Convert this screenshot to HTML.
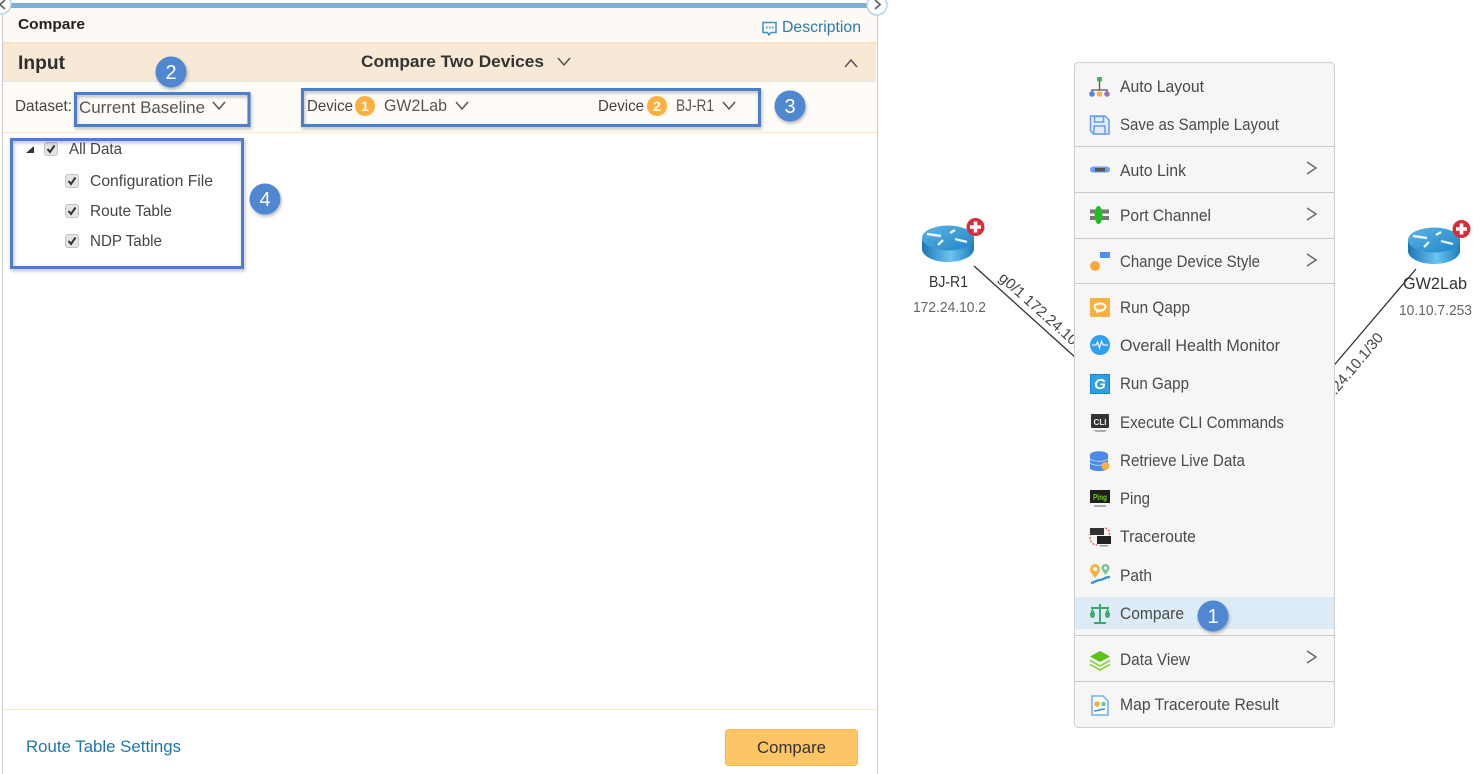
<!DOCTYPE html>
<html><head><meta charset="utf-8"><title>Compare</title>
<style>
html,body{margin:0;padding:0;background:#fff;width:1483px;height:774px;overflow:hidden}
svg{display:block;position:absolute;left:0;top:0}
text{font-family:"Liberation Sans",sans-serif;fill:#444;font-size:16px}
.m{font-size:16.5px;fill:#4a4a4a}
.b{font-weight:bold;fill:#333}
.n{fill:#fff;text-anchor:middle}
.c{fill:none;stroke:#555;stroke-width:1.500}
.ma{fill:none;stroke:#6e6e6e;stroke-width:1.600}
.bx{fill:none;stroke:#4f7ec9;stroke-width:3;filter:url(#s)}
.cb{fill:#e4e4e4;stroke:#c4c4c4;stroke-width:1}
.ck{fill:none;stroke:#333;stroke-width:2}
</style></head><body>
<svg width="1483" height="774" viewBox="0 0 1483 774" xmlns="http://www.w3.org/2000/svg">
<defs>
<filter id="s" x="-20%" y="-20%" width="140%" height="140%"><feDropShadow dx="1" dy="2" stdDeviation="1.500" flood-color="#000" flood-opacity=".28"/></filter>
<linearGradient id="rb" x1="0" x2="1" y1="0" y2="0"><stop offset="0" stop-color="#1c76b6"/><stop offset=".55" stop-color="#6cc4f0"/><stop offset="1" stop-color="#1f7dbd"/></linearGradient>
<linearGradient id="rt" x1="0" x2="1" y1="0" y2="1"><stop offset="0" stop-color="#5db3e4"/><stop offset="1" stop-color="#1f86c8"/></linearGradient>
<g id="router">
<path d="M0 13v11c0 7 11.500 13 26 13s26-6 26-13V13z" fill="url(#rb)"/>
<ellipse cx="26" cy="13" rx="26" ry="12.500" fill="url(#rt)"/>
<path d="M5 9l14 2M33 14l12 3M16 20l5-5M28 8l5-3" stroke="#e6f4fb" stroke-width="2.400" fill="none"/>
</g>
<g id="plus"><circle r="9" fill="#d5303a"/><path d="M-5.500 0h11M0-5.500v11" stroke="#fff" stroke-width="3.600"/></g>
<g id="cbx"><rect x=".5" y=".5" width="13" height="13" rx="2.500" class="cb"/><path d="M3.500 7l2.500 3 4.500-6.500" class="ck"/></g>
</defs>

<!-- Left panel -->
<rect x="3" y="8" width="874" height="34" fill="#fdf9f4"/>
<rect x="3" y="42" width="874" height="2" fill="#f8e4c4"/>
<rect x="3" y="44" width="873" height="37" fill="#f7e9d5"/>
<rect x="3" y="81" width="873" height="1" fill="#e6e4e0"/>
<rect x="3" y="82" width="874" height="50" fill="#fffcf8"/>
<rect x="3" y="132" width="874" height="1" fill="#fae6c4"/>
<rect x="3" y="709" width="874" height="1" fill="#f6e6c6"/>
<rect x="2" y="8" width="1" height="766" fill="#c9c9c9"/>
<rect x="877" y="8" width="1" height="766" fill="#c9c9c9"/>
<rect x="8" y="3" width="866" height="5" fill="#7db0d9"/>
<circle cx="1" cy="4" r="10" fill="#fff" stroke="#b6d3ea" stroke-width="1.500"/>
<path d="M5 0L0 4.500 5 9" fill="none" stroke="#666" stroke-width="1.800"/>
<circle cx="877" cy="5" r="10" fill="#fff" stroke="#b6d3ea" stroke-width="1.500"/>
<path d="M875 0l5 4.500-5 4.500" fill="none" stroke="#666" stroke-width="1.800"/>

<text x="18" y="29" class="b" style="font-size:15px;fill:#222" textLength="67" lengthAdjust="spacingAndGlyphs">Compare</text>
<path d="M763 22.500h13v10h-5l-2 2.500-1.500-2.500H763z" fill="none" stroke="#3c93c9" stroke-width="1.500"/>
<path d="M766 27.500h1.500M769 27.500h1.500M772 27.500h1.500" stroke="#3c93c9" stroke-width="1.800"/>
<text x="782" y="32" style="font-size:16px;fill:#2a7ab0" textLength="79" lengthAdjust="spacingAndGlyphs">Description</text>
<text x="18" y="69" class="b" style="font-size:19px;fill:#2e2e2e" textLength="47" lengthAdjust="spacingAndGlyphs">Input</text>
<text x="361" y="67" class="b" style="font-size:17px" textLength="183" lengthAdjust="spacingAndGlyphs">Compare Two Devices</text>
<path d="M558 58l6 7 6-7" class="c"/>
<path d="M845 67l6-7 6 7" class="c"/>

<text x="15" y="111" style="font-size:16px" textLength="57" lengthAdjust="spacingAndGlyphs">Dataset:</text>
<text x="79" y="113" style="font-size:17px;fill:#555" textLength="126" lengthAdjust="spacingAndGlyphs">Current Baseline</text>
<path d="M213 102l6 7 6-7" class="c"/>
<text x="307" y="111" style="font-size:16px" textLength="46" lengthAdjust="spacingAndGlyphs">Device</text>
<circle cx="365" cy="106" r="10" fill="#fbb040"/>
<text x="365" y="111" class="b" style="font-size:14px;fill:#fff" text-anchor="middle">1</text>
<text x="384" y="111" style="font-size:17px;fill:#555" textLength="63" lengthAdjust="spacingAndGlyphs">GW2Lab</text>
<path d="M456 102l6 7 6-7" class="c"/>
<text x="598" y="111" style="font-size:16px" textLength="46" lengthAdjust="spacingAndGlyphs">Device</text>
<circle cx="657" cy="106" r="10" fill="#fbb040"/>
<text x="657" y="111" class="b" style="font-size:14px;fill:#fff" text-anchor="middle">2</text>
<text x="676" y="111" style="font-size:17px;fill:#555" textLength="38" lengthAdjust="spacingAndGlyphs">BJ-R1</text>
<path d="M723 102l6 7 6-7" class="c"/>

<path d="M26 153l8-7v7z" fill="#333"/>
<use href="#cbx" x="44" y="142"/>
<text x="69" y="154" style="font-size:16px" textLength="53" lengthAdjust="spacingAndGlyphs">All Data</text>
<use href="#cbx" x="65" y="174"/>
<text x="90" y="186" style="font-size:16px" textLength="123" lengthAdjust="spacingAndGlyphs">Configuration File</text>
<use href="#cbx" x="65" y="204"/>
<text x="90" y="216" style="font-size:16px" textLength="82" lengthAdjust="spacingAndGlyphs">Route Table</text>
<use href="#cbx" x="65" y="234"/>
<text x="90" y="246" style="font-size:16px" textLength="72" lengthAdjust="spacingAndGlyphs">NDP Table</text>

<rect x="75.500" y="93.500" width="173.500" height="32" class="bx"/>
<rect x="302.500" y="89.500" width="457" height="36" class="bx"/>
<rect x="11.500" y="139.500" width="231" height="128" class="bx"/>

<text x="26" y="752" style="font-size:17px;fill:#1f76ad" textLength="155" lengthAdjust="spacingAndGlyphs">Route Table Settings</text>
<rect x="725.500" y="729.500" width="132" height="36" rx="3" fill="#fdc566" stroke="#f2b654"/>
<text x="757" y="753" style="font-size:17px;fill:#333" textLength="69" lengthAdjust="spacingAndGlyphs">Compare</text>

<!-- Topology -->
<path d="M974 266L1076 358" stroke="#333" stroke-width="1.300"/>
<path d="M1416 269L1330 370" stroke="#333" stroke-width="1.300"/>
<use href="#router" x="922" y="225"/>
<use href="#plus" x="975.500" y="227"/>
<use href="#router" x="1408" y="227"/>
<use href="#plus" x="1461.500" y="229"/>
<text x="929" y="287" style="font-size:16px;fill:#333" textLength="39" lengthAdjust="spacingAndGlyphs">BJ-R1</text>
<text x="913" y="312" style="font-size:15px;fill:#666" textLength="73" lengthAdjust="spacingAndGlyphs">172.24.10.2</text>
<text x="1403" y="289" style="font-size:17px;fill:#333" textLength="64" lengthAdjust="spacingAndGlyphs">GW2Lab</text>
<text x="1399" y="315" style="font-size:15px;fill:#666" textLength="73" lengthAdjust="spacingAndGlyphs">10.10.7.253</text>
<text transform="translate(998,279) rotate(42)" style="font-size:15px;fill:#444">g0/1 172.24.10.2/30</text>
<text transform="translate(1384,338) rotate(-50)" text-anchor="end" style="font-size:15px;fill:#444">172.24.10.1/30</text>

<!-- Context menu -->
<rect x="1074.500" y="62.500" width="260" height="665" rx="4" fill="#f6f6f6" stroke="#cfcfcf"/>
<rect x="1075" y="597" width="259" height="32" fill="#dcebf5"/>
<g fill="#c9c9c9">
<rect x="1075" y="146" width="259" height="1"/><rect x="1075" y="192" width="259" height="1"/>
<rect x="1075" y="238" width="259" height="1"/><rect x="1075" y="283" width="259" height="1"/>
<rect x="1075" y="635" width="259" height="1"/><rect x="1075" y="681" width="259" height="1"/>
</g>
<text class="m" x="1120" y="92" textLength="84" lengthAdjust="spacingAndGlyphs">Auto Layout</text>
<text class="m" x="1120" y="130" textLength="159" lengthAdjust="spacingAndGlyphs">Save as Sample Layout</text>
<text class="m" x="1120" y="176" textLength="66" lengthAdjust="spacingAndGlyphs">Auto Link</text>
<text class="m" x="1120" y="221" textLength="91" lengthAdjust="spacingAndGlyphs">Port Channel</text>
<text class="m" x="1120" y="267" textLength="140" lengthAdjust="spacingAndGlyphs">Change Device Style</text>
<text class="m" x="1120" y="313" textLength="70" lengthAdjust="spacingAndGlyphs">Run Qapp</text>
<text class="m" x="1120" y="351" textLength="160" lengthAdjust="spacingAndGlyphs">Overall Health Monitor</text>
<text class="m" x="1120" y="389" textLength="69" lengthAdjust="spacingAndGlyphs">Run Gapp</text>
<text class="m" x="1120" y="428" textLength="164" lengthAdjust="spacingAndGlyphs">Execute CLI Commands</text>
<text class="m" x="1120" y="466" textLength="125" lengthAdjust="spacingAndGlyphs">Retrieve Live Data</text>
<text class="m" x="1120" y="504" textLength="30" lengthAdjust="spacingAndGlyphs">Ping</text>
<text class="m" x="1120" y="542" textLength="76" lengthAdjust="spacingAndGlyphs">Traceroute</text>
<text class="m" x="1120" y="581" textLength="32" lengthAdjust="spacingAndGlyphs">Path</text>
<text class="m" x="1120" y="619" textLength="64" lengthAdjust="spacingAndGlyphs">Compare</text>
<text class="m" x="1120" y="665" textLength="70" lengthAdjust="spacingAndGlyphs">Data View</text>
<text class="m" x="1120" y="710" textLength="159" lengthAdjust="spacingAndGlyphs">Map Traceroute Result</text>
<path d="M1307 162l9 6-9 6M1307 208l9 6-9 6M1307 254l9 6-9 6M1307 651l9 6-9 6" class="ma"/>

<!-- Menu icons -->
<path d="M1099.500 80v10M1092 93v-3h15v3" fill="none" stroke="#555" stroke-width="1.300"/>
<rect x="1097" y="77" width="5" height="4.500" rx="1" fill="#4faf54"/>
<circle cx="1092" cy="94" r="2.800" fill="#4f86e0"/><circle cx="1099.500" cy="94" r="2.800" fill="#fbb040"/><circle cx="1107" cy="94" r="2.800" fill="#a070d0"/>
<g fill="#e2edfe" stroke="#6a9cf0" stroke-width="1.500"><path d="M1090.500 116h14.500l4 4v14h-15.500l-3-3z"/><rect x="1094.500" y="116.500" width="9" height="5.500"/><rect x="1094" y="126" width="11" height="8"/></g>
<rect x="1090" y="166.500" width="20" height="6" rx="3" fill="#6e9ff0"/><rect x="1095" y="168" width="10" height="3.500" fill="#555"/>
<rect x="1090" y="209.500" width="19" height="4" fill="#777"/><rect x="1090" y="216" width="19" height="4" fill="#777"/>
<ellipse cx="1098.500" cy="215" rx="4" ry="9" fill="#1fbf1f"/>
<rect x="1100" y="252" width="10" height="6" fill="#4f8fee"/><circle cx="1095" cy="266" r="5" fill="#fba93c"/>
<rect x="1090" y="298" width="20" height="19" rx="1" fill="#fbb040"/><ellipse cx="1100" cy="307" rx="5.500" ry="3.500" fill="none" stroke="#fff" stroke-width="2"/><path d="M1096 312l7-2" stroke="#fff" stroke-width="2"/>
<circle cx="1100" cy="345" r="10" fill="#2f9fee"/><path d="M1092 345h4l1.500-3 2 6 2-7 1.500 4h5" fill="none" stroke="#e6f6ff" stroke-width="1.300"/>
<rect x="1090.500" y="374.500" width="19" height="19" fill="#2f9fe6" stroke="#1d85cc"/>
<text x="1100" y="389" text-anchor="middle" style="font-size:15px;font-weight:bold;font-style:italic;fill:#fff">G</text>
<rect x="1091" y="414" width="18" height="14" rx="1" fill="#333"/><path d="M1093 430h14l-2 2h-9z" fill="#aaa"/>
<text x="1100" y="425" text-anchor="middle" style="font-size:8px;font-weight:bold;fill:#eee" textLength="13" lengthAdjust="spacingAndGlyphs">CLI</text>
<path d="M1090 455c0-5 18-5 18 0v13c0 4-18 4-18 0z" fill="#4a8be8"/><path d="M1090 459c3 3 15 3 18 0M1090 463c3 3 15 3 18 0" fill="none" stroke="#cfe0fb" stroke-width=".8"/>
<circle cx="1105.500" cy="466" r="4" fill="#fbb040"/>
<rect x="1090" y="490" width="20" height="13" fill="#1e1e1e"/>
<text x="1100" y="500" text-anchor="middle" style="font-size:8px;font-weight:bold;fill:#6fce1f" textLength="14" lengthAdjust="spacingAndGlyphs">Ping</text>
<path d="M1095 505h10l2 2h-14z" fill="#aaa"/>
<rect x="1090" y="528" width="14" height="7" fill="#333"/><rect x="1097" y="536" width="14" height="8" fill="#222"/><path d="M1100 545h8v1.500h-8z" fill="#999"/>
<path d="M1105 528c4 1 5 4 4 7M1090 537c0 5 3 8 7 8" fill="none" stroke="#e8483f" stroke-width="1.200" stroke-dasharray="2 1.500"/>
<path d="M1091 583c5-1 5-3 9-3s4-3 10-3" fill="none" stroke="#2f8fe8" stroke-width="2.200"/>
<path d="M1095 578c-3-4-5-6-5-9a5 5 0 0 1 10 0c0 3-2 5-5 9z" fill="#fbb040"/><circle cx="1095" cy="569" r="2" fill="#fff"/>
<path d="M1105.500 575c-2-3-4-5-4-7a4 4 0 0 1 8 0c0 2-2 4-4 7z" fill="#6cc89a"/><circle cx="1105.500" cy="568" r="1.600" fill="#fff"/>
<g fill="none" stroke="#3fa76c" stroke-width="2"><path d="M1100 604v18M1094 623h12M1091 608h18"/></g>
<path d="M1090 614l2.500-6 2.500 6v1a2.500 3 0 0 1-5 0zM1105 614l2.500-6 2.500 6v1a2.500 3 0 0 1-5 0z" fill="#3fa76c"/>
<path d="M1100 651l10 5.500-10 5.500-10-5.500z" fill="#5cc21a"/>
<path d="M1090 660.500l10 5.500 10-5.500M1090 664.500l10 5.500 10-5.500" fill="none" stroke="#8ad24a" stroke-width="1.700"/>
<path d="M1092 696h11l5 5v14h-16z" fill="#fff" stroke="#6eaef0" stroke-width="1.500"/>
<circle cx="1097" cy="704" r="2.800" fill="#fbb040"/><circle cx="1103.500" cy="704" r="2.300" fill="#6cc89a"/>
<path d="M1094 711c4 0 5-2 11-2" fill="none" stroke="#2f8fe8" stroke-width="1.500"/>

<!-- Number callouts -->
<g filter="url(#s)"><circle cx="171" cy="72" r="15.500" fill="#5088d0"/><circle cx="790" cy="106" r="15.500" fill="#5088d0"/><circle cx="265" cy="199" r="15.500" fill="#5088d0"/><circle cx="1213" cy="616" r="15.500" fill="#5088d0"/></g>
<text class="n" x="171" y="79" style="font-size:20px">2</text>
<text class="n" x="790" y="113" style="font-size:20px">3</text>
<text class="n" x="265" y="206" style="font-size:20px">4</text>
<text class="n" x="1213" y="623" style="font-size:20px">1</text>
</svg>
</body></html>
